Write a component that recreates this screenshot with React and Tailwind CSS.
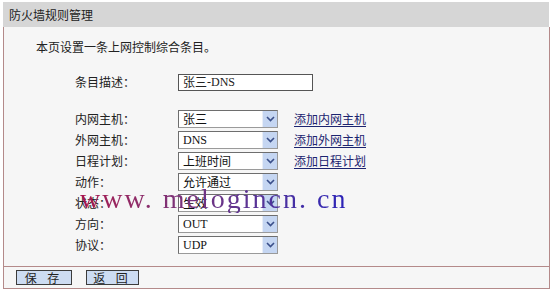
const cjk = { fontFamily: '"Noto Sans CJK SC", "Liberation Sans", sans-serif' };
const mono = { fontFamily: '"Liberation Serif", "Noto Sans CJK SC", serif' };

const Chevron = () => (
  <svg width="9" height="6" viewBox="0 0 9 6">
    <path d="M1 1 L4.5 4.5 L8 1" fill="none" stroke="#3a4f8a" strokeWidth="1.6" />
  </svg>
);

const Select = ({ value, latin }) => (
  <div className="w-[100px] h-[18px] border border-[#9a9a9a] border-t-[#6e6e6e] border-l-[#6e6e6e] bg-white flex items-center">
    <span className="flex-1 pl-[4px] text-[12px] leading-none text-[#111]" style={latin ? mono : cjk}>
      {value}
    </span>
    <span className="w-[15px] h-[16px] bg-[#c5d6f2] border-l border-[#e8eef8] flex items-center justify-center">
      <Chevron />
    </span>
  </div>
);

const rows = [
  { label: '内网主机：', value: '张三', link: '添加内网主机' },
  { label: '外网主机：', value: 'DNS', latin: true, link: '添加外网主机' },
  { label: '日程计划：', value: '上班时间', link: '添加日程计划' },
  { label: '动作：', value: '允许通过' },
  { label: '状态：', value: '生效' },
  { label: '方向：', value: 'OUT', latin: true },
  { label: '协议：', value: 'UDP', latin: true },
];

export default function App() {
  return (
    <div className="w-[553px] h-[290px] bg-white pt-[2px] px-[3px] relative overflow-hidden text-[12px] text-[#222]" style={cjk}>
      {/* title bar */}
      <div className="h-[25px] bg-[#d6d6d6] flex items-center pl-[6px] mr-[1px]">
        <span className="text-[12px]">防火墙规则管理</span>
      </div>

      {/* form body */}
      <div className="h-[239px] bg-[#f6f6f6] border-x border-[#b48a8a] pt-[12px]">
        <div className="pl-[32px] h-[16px] leading-[16px]">本页设置一条上网控制综合条目。</div>

        <div className="mt-[18px] flex items-center h-[18px]">
          <span className="w-[174px] pl-[71px]">条目描述：</span>
          <div className="w-[135px] h-[17px] border border-[#555] bg-white flex items-center pl-[4px] text-[12px]">
            <span>张三</span><span style={mono}>-DNS</span>
          </div>
        </div>

        <div className="mt-[19px] flex flex-col gap-[3px]">
          {rows.map((r) => (
            <div key={r.label} className="flex items-center h-[18px]">
              <span className="w-[174px] pl-[71px]">{r.label}</span>
              <Select value={r.value} latin={r.latin} />
              {r.link && (
                <a className="ml-[16px] text-[#1c2470] underline underline-offset-2">{r.link}</a>
              )}
            </div>
          ))}
        </div>
      </div>

      {/* button bar */}
      <div className="h-[23px] bg-[#f6f6f6] border border-[#b48a8a] flex items-center gap-[14px] pl-[12px]">
        <button className="w-[56px] h-[15px] bg-[#cddcf2] border border-[#3c3c3c] text-[12px] leading-none tracking-[4px]">保 存</button>
        <button className="w-[53px] h-[15px] bg-[#cddcf2] border border-[#3c3c3c] text-[12px] leading-none tracking-[4px]">返 回</button>
      </div>

      {/* watermark */}
      <div
        className="absolute left-[80px] top-[185px] text-[28px] leading-none tracking-[2px] bg-gradient-to-r from-[#a8124e] to-[#2b22b8] bg-clip-text text-transparent pointer-events-none"
        style={{ fontFamily: '"Liberation Serif", serif' }}
      >
        www. melogincn. cn
      </div>
    </div>
  );
}
